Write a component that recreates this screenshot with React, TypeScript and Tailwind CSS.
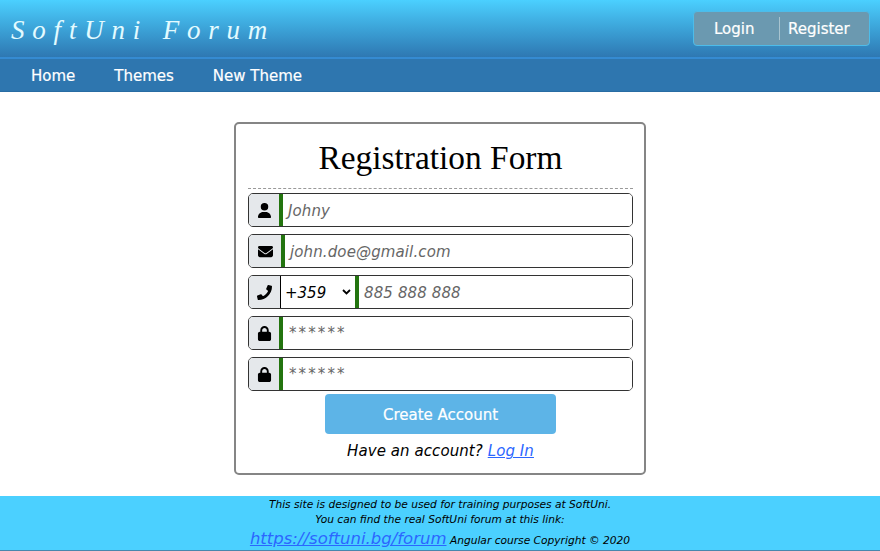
import type { ReactNode } from "react";
import { FaUser, FaEnvelope, FaLock } from "react-icons/fa6";
import { FaPhone } from "react-icons/fa";

function Field({ icon, iconWidth, children }: { icon: ReactNode; iconWidth: string; children: ReactNode }) {
  return (
    <div className="flex h-[34px] overflow-hidden rounded-[5px] border border-[#333]">
      <span className={`flex shrink-0 items-center justify-center bg-[#e5e8eb] text-[15px] text-black ${iconWidth}`}>{icon}</span>
      {children}
    </div>
  );
}

const inputClass =
  "min-w-0 flex-1 border-l-4 border-[#23740f] bg-white pt-[2px] pl-px indent-[4px] text-[15px] tracking-[0.12px] italic text-black outline-none placeholder:text-[#666]";
const passwordClass =
  "min-w-0 flex-1 border-l-4 border-[#23740f] bg-white pt-px pl-[6px] text-[15px] tracking-[2.1px] text-black outline-none placeholder:text-[#666]";

export default function App() {
  return (
    <div className="flex h-[551px] w-[880px] flex-col overflow-hidden bg-white font-['DejaVu_Sans',sans-serif] text-[15px] text-black">
      <header className="flex h-[57px] shrink-0 items-start justify-between bg-linear-to-b from-[#4bd0ff] to-[#2e78b2] pt-[11px] pr-[10px] pl-[11px]">
        <h1 className="font-['Liberation_Serif',serif] text-[27px] leading-[38px] tracking-[7.8px] whitespace-pre text-[#e3fbff] italic">SoftUni Forum</h1>
        <div className="flex h-[35px] w-[177px] items-center rounded-[4px] border border-[#4dbce9] bg-[#6b99b0] text-white [-webkit-text-stroke:0.2px_white]">
          <a className="w-[85px] pt-[2px] pl-[20px]">Login</a>
          <a className="flex h-[23px] items-center border-l border-[#a8c4d0] pt-[2px] pl-[8px]">Register</a>
        </div>
      </header>
      <nav className="flex h-[35px] shrink-0 items-center gap-[39px] border-t-2 border-b border-t-[#358bd2] border-b-[#286ca3] bg-[#2e76af] pt-[2px] pl-[31px] text-white [-webkit-text-stroke:0.2px_white]">
        <a>Home</a>
        <a>Themes</a>
        <a>New Theme</a>
      </nav>
      <main className="flex-1 pt-[30px]">
        <form className="mx-auto h-[353px] w-[412px] rounded-[5px] border-2 border-[#858585] pr-[11px] pl-[12px]" onSubmit={(e) => e.preventDefault()}>
          <h2 className="h-[65px] border-b border-dashed border-[#999] pt-[14px] text-center font-['Liberation_Serif',serif] text-[33.4px] leading-[40px]">Registration Form</h2>
          <div className="flex flex-col gap-[7px] pt-[4px]">
            <Field icon={<FaUser />} iconWidth="w-[30px]">
              <input className={inputClass} placeholder="Johny" />
            </Field>
            <Field icon={<FaEnvelope />} iconWidth="w-[32px]">
              <input className={inputClass} placeholder="john.doe@gmail.com" />
            </Field>
            <Field icon={<FaPhone />} iconWidth="w-[31px]">
              <div className="flex w-[75px] shrink-0 items-center justify-between border-l border-black pr-[4px] pl-[4px] italic">
                <span className="pt-[2px]">+359</span>
                <svg width="9" height="6" viewBox="0 0 9 6" fill="none" stroke="black" strokeWidth="1.8"><path d="M1 1l3.5 3.5L8 1" /></svg>
              </div>
              <input className={inputClass} placeholder="885 888 888" />
            </Field>
            <Field icon={<FaLock />} iconWidth="w-[30px]">
              <input className={passwordClass} placeholder="******" />
            </Field>
            <Field icon={<FaLock />} iconWidth="w-[30px]">
              <input className={passwordClass} placeholder="******" />
            </Field>
          </div>
          <button className="mx-auto mt-[3px] block h-[40px] w-[231px] rounded-[4px] bg-[#5db4e7] pt-[2px] text-white [-webkit-text-stroke:0.2px_white]">Create Account</button>
          <p className="mt-[6px] text-center leading-[22px] tracking-[0.08px] italic">
            Have an account? <a className="text-[#2b66ff] underline">Log In</a>
          </p>
        </form>
      </main>
      <footer className="h-[55px] shrink-0 border-b border-[#4787ad] bg-[#4bd0ff] pt-px text-center text-[10.65px] leading-[15px] italic">
        <p>This site is designed to be used for training purposes at SoftUni.</p>
        <p>You can find the real SoftUni forum at this link:</p>
        <p className="leading-[24px]">
          <a className="text-[16.5px] text-[#2b66ff] underline">https://softuni.bg/forum</a> Angular course Copyright © 2020
        </p>
      </footer>
    </div>
  );
}
